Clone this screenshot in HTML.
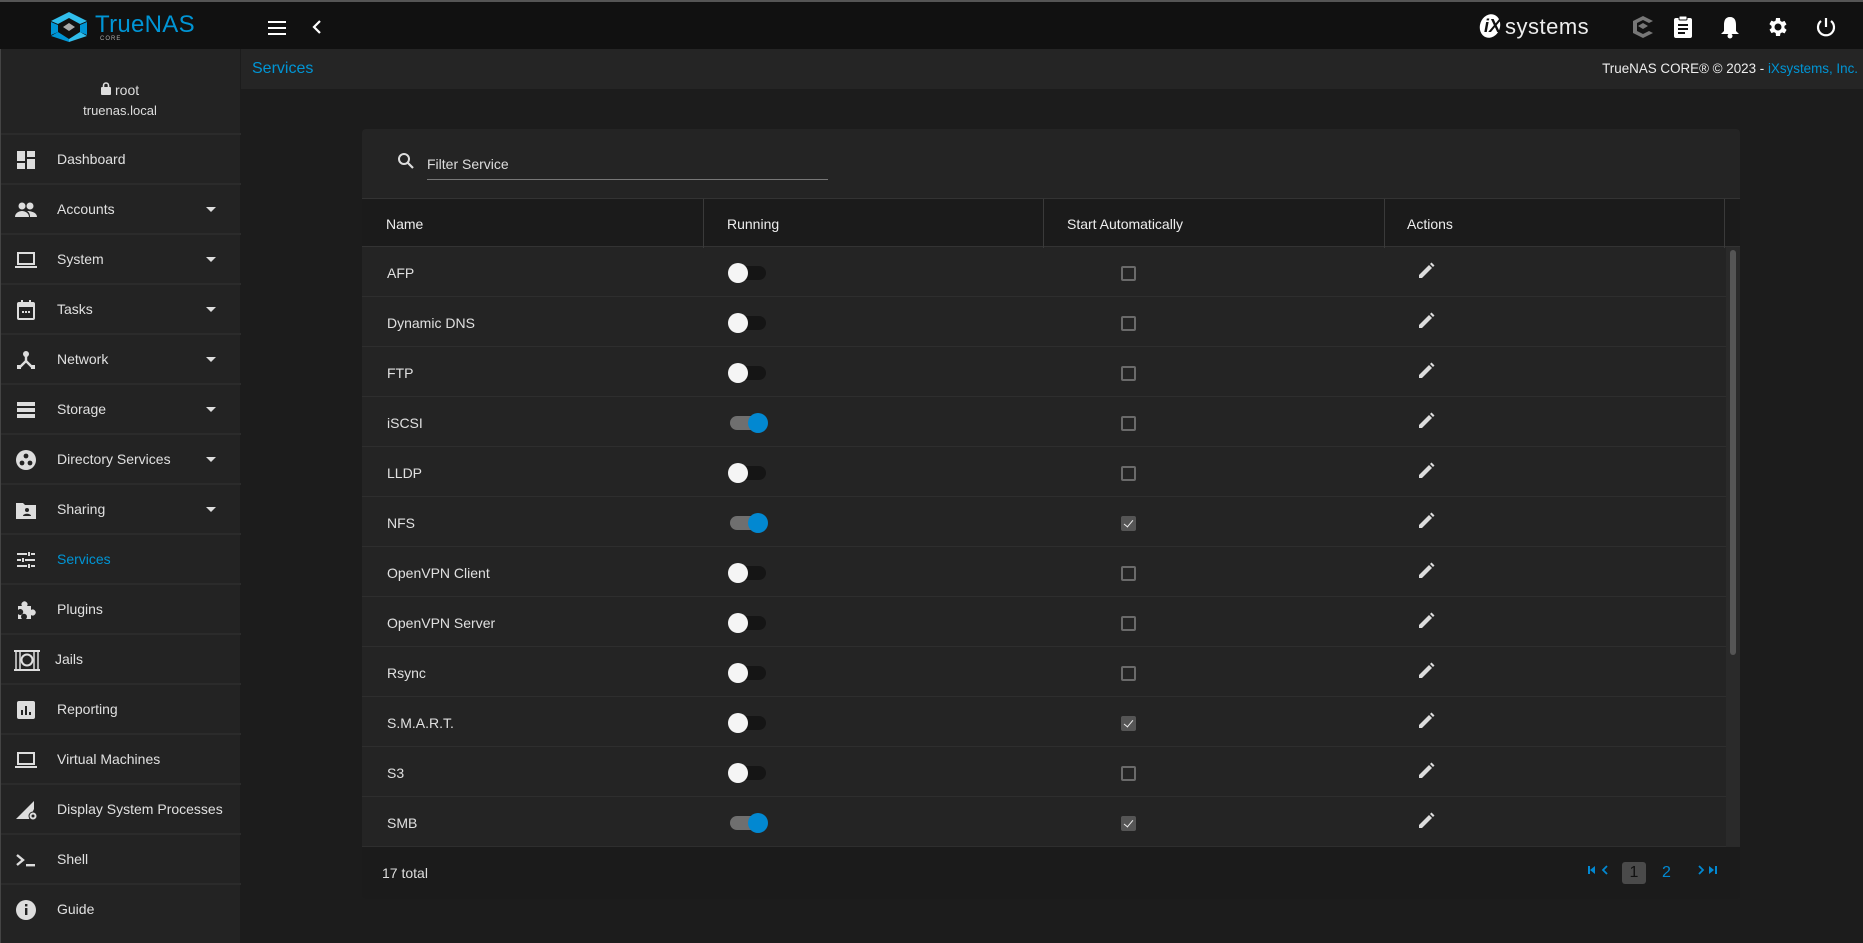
<!DOCTYPE html>
<html><head><meta charset="utf-8"><style>
*{box-sizing:border-box;margin:0;padding:0}
body{width:1863px;height:943px;background:#1c1c1c;font-family:"Liberation Sans",sans-serif;color:#e0e0e0;overflow:hidden;position:relative}
.abs{position:absolute}
#top{left:0;top:0;width:1863px;height:49px;background:#111;border-top:2px solid #555}
#side{left:0;top:49px;width:240px;height:894px;background:#232323;border-left:1px solid #444}
.item{position:absolute;left:0;width:240px;height:50px;border-top:2px solid #2b2b2b;font-size:14px;color:#e0e0e0}
.item span.t{position:absolute;left:56px;top:16px}
.item svg{position:absolute;left:13px;top:13px}
.item .ar{position:absolute;left:205px;top:22px;width:0;height:0;border-left:5px solid transparent;border-right:5px solid transparent;border-top:5px solid #ddd}
#crumb{left:241px;top:49px;width:1622px;height:40px;background:#252525}
#card{left:362px;top:129px;width:1378px;height:770px;background:#242424;border-radius:4px;overflow:hidden}
.hdr{position:absolute;top:69px;left:0;width:1378px;height:49px;background:#1b1b1b;border-top:1px solid #333;border-bottom:1px solid #333;font-size:14px;color:#eee}
.hdr span{position:absolute;top:17px}
.hdr i{position:absolute;top:0;width:1px;height:49px;background:#3a3a3a}
.row{position:absolute;left:0;width:1364px;height:50px;border-bottom:1px solid #2e2e2e;font-size:14px;color:#e0e0e0}
.row .n{position:absolute;left:25px;top:18px}
.tg{position:absolute;left:368px;top:19px;width:36px;height:14px;border-radius:7px;background:#151515}
.tg b{position:absolute;left:-2px;top:-3px;width:20px;height:20px;border-radius:50%;background:#f5f5f5}
.tg.on{background:#6f6f6f}.tg.on b{left:18px;background:#0288d1}
.cb{position:absolute;left:759px;top:19px;width:15px;height:15px;border:2px solid #6a6a6a;border-radius:2px}
.cb.on{background:#555;border-color:#555}
.cb.on:after{content:"";position:absolute;left:3px;top:0px;width:4px;height:8px;border:solid #eee;border-width:0 1.5px 1.5px 0;transform:rotate(40deg)}
.pen{position:absolute;left:1054px;top:14px}
#foot{position:absolute;left:0;top:718px;width:1378px;height:52px;background:#1b1b1b;font-size:14px}
</style></head><body>
<div id="top" class="abs">
 <svg class="abs" style="left:50px;top:10px" width="38" height="30" viewBox="0 0 38 30"><path d="M19 0 L37 9 L30 12 L19 6 L8 12 L1 9Z" fill="#31beec"/><path d="M1 10 L8 13 L8 20 L1 23Z" fill="#0095d5"/><path d="M37 10 L30 13 L30 20 L37 23Z" fill="#0095d5"/><path d="M1 24 L8 20 L19 27 L19 30 Z" fill="#0095d5"/><path d="M37 24 L30 20 L19 27 L19 30Z" fill="#31beec"/><path d="M19 11 L25 15 L19 19 L13 15Z" fill="#aaa"/></svg>
 <div class="abs" style="left:95px;top:9px;font-size:24px;color:#0095d5;letter-spacing:0.3px">True<b style="font-weight:normal">NAS</b></div>
 <div class="abs" style="left:100px;top:34px;font-size:6px;color:#aaa;letter-spacing:1px">CORE</div>
 <div class="abs" style="left:268px;top:19px;width:18px;height:2px;background:#fff;box-shadow:0 6px 0 #fff,0 12px 0 #fff"></div>
 <svg class="abs" style="left:312px;top:18px" width="10" height="14" viewBox="0 0 10 14"><path d="M8 1 L2 7 L8 13" stroke="#fff" stroke-width="2.2" fill="none"/></svg>
 <div class="abs" style="left:1480px;top:12px;width:20px;height:24px;border-radius:50%;background:#fff;transform:rotate(20deg)"></div>
 <div class="abs" style="left:1484px;top:14px;font-size:18px;color:#111;font-weight:bold;font-style:italic">iX</div>
 <div class="abs" style="left:1505px;top:12px;font-size:22px;color:#eee;letter-spacing:0.5px">systems</div>
 <svg class="abs" style="left:1631px;top:13px" width="24" height="24" viewBox="0 0 24 24"><path d="M12 1 L22 6 L18 8 L12 5 L6 8 L6 16 L12 19 L18 16 L22 18 L12 23 L2 18 L2 6Z" fill="#777"/><path d="M12 8 L17 11 L12 14 L7 11Z" fill="#777"/></svg>
 <svg class="abs" style="left:1673px;top:13px" width="20" height="24" viewBox="0 0 20 24"><rect x="1" y="3" width="18" height="20" rx="2" fill="#fff"/><rect x="6" y="1" width="8" height="4" rx="1" fill="#fff" stroke="#111"/><rect x="5" y="9" width="10" height="2" fill="#111"/><rect x="5" y="13" width="10" height="2" fill="#111"/><rect x="5" y="17" width="7" height="2" fill="#111"/></svg>
 <svg class="abs" style="left:1720px;top:13px" width="20" height="24" viewBox="0 0 20 24"><path d="M10 2 C5 2 4 6 4 10 L4 16 L1 19 L19 19 L16 16 L16 10 C16 6 15 2 10 2Z" fill="#fff"/><circle cx="10" cy="21" r="2.5" fill="#fff"/></svg>
 <svg class="abs" style="left:1766px;top:13px" width="24" height="24" viewBox="0 0 24 24"><path fill="#fff" d="M19.4 13a7.5 7.5 0 0 0 0-2l2.1-1.6-2-3.5-2.5 1a7 7 0 0 0-1.7-1L15 3h-4l-.4 2.6a7 7 0 0 0-1.7 1l-2.5-1-2 3.5L6.6 11a7.5 7.5 0 0 0 0 2l-2.1 1.6 2 3.5 2.5-1a7 7 0 0 0 1.7 1L11 21h4l.4-2.6a7 7 0 0 0 1.7-1l2.5 1 2-3.5zM13 15.5a3.5 3.5 0 1 1 0-7 3.5 3.5 0 0 1 0 7z" transform="translate(-1 0)"/></svg>
 <svg class="abs" style="left:1814px;top:13px" width="24" height="24" viewBox="0 0 24 24"><path d="M12 3 L12 12" stroke="#fff" stroke-width="2.2"/><path d="M7 6 A8 8 0 1 0 17 6" stroke="#fff" stroke-width="2.2" fill="none"/></svg>
</div>
<div id="crumb" class="abs">
 <div class="abs" style="left:11px;top:11px;font-size:16px;color:#0095d5">Services</div>
 <div class="abs" style="right:5px;top:12px;font-size:13.4px;color:#eee">TrueNAS CORE® © 2023 - <span style="color:#0095d5">iXsystems, Inc.</span></div>
</div>
<div id="side" class="abs">
 <svg class="abs" style="left:100px;top:33px" width="10" height="13" viewBox="0 0 10 13"><rect x="0" y="5" width="10" height="8" rx="1" fill="#ddd"/><path d="M2.5 6V3.5a2.5 2.5 0 0 1 5 0V6" stroke="#ddd" stroke-width="1.6" fill="none"/></svg>
 <div class="abs" style="left:114px;font-size:14px;top:33px;color:#ddd">root</div>
 <div class="abs" style="left:0;width:238px;text-align:center;font-size:13px;top:54px;color:#ddd">truenas.local</div>
</div>
<div id="items"></div>
<div id="card" class="abs">
 <svg class="abs" style="left:35px;top:23px" width="18" height="18" viewBox="0 0 18 18"><circle cx="7" cy="7" r="5" stroke="#ddd" stroke-width="2" fill="none"/><path d="M11 11 L16 16" stroke="#ddd" stroke-width="2.2"/></svg>
 <div class="abs" style="left:65px;top:27px;font-size:14px;color:#ddd">Filter Service</div>
 <div class="abs" style="left:65px;top:50px;width:401px;height:1px;background:#777"></div>
 <div class="hdr"><span style="left:24px">Name</span><i style="left:341px"></i><span style="left:365px">Running</span><i style="left:681px"></i><span style="left:705px">Start Automatically</span><i style="left:1022px"></i><span style="left:1045px">Actions</span><i style="left:1362px"></i></div>
 <div id="rows"></div>
 <div class="abs" style="left:1364px;top:118px;width:14px;height:600px;background:#2a2a2a"></div>
 <div class="abs" style="left:1368px;top:121px;width:6px;height:405px;background:#555;border-radius:3px"></div>
 <div id="foot"><span class="abs" style="left:20px;top:18px;color:#ddd">17 total</span>
  <svg class="abs" style="left:1226px;top:18px" width="22" height="10" viewBox="0 0 22 10"><rect x="0" y="1" width="2" height="8" fill="#0288d1"/><path d="M7 1v8L2 5z" fill="#0288d1"/><path d="M19 1l-4 4 4 4" stroke="#0288d1" stroke-width="1.8" fill="none"/></svg>
  <div class="abs" style="left:1260px;top:15px;width:24px;height:22px;border-radius:3px;background:#4a4a4a;color:#111;font-size:16px;text-align:center;line-height:22px">1</div>
  <span class="abs" style="left:1300px;top:17px;color:#0288d1;font-size:16px">2</span>
  <svg class="abs" style="left:1334px;top:18px" width="22" height="10" viewBox="0 0 22 10"><path d="M3 1l4 4-4 4" stroke="#0288d1" stroke-width="1.8" fill="none"/><path d="M13 1v8l5-4z" fill="#0288d1"/><rect x="19" y="1" width="2" height="8" fill="#0288d1"/></svg>
 </div>
</div>
<script>
var it=[["Dashboard","dash",0],["Accounts","acc",1],["System","sys",1],["Tasks","task",1],["Network","net",1],["Storage","stor",1],["Directory Services","dir",1],["Sharing","share",1],["Services","svc",0],["Plugins","plug",0],["Jails","jail",0],["Reporting","rep",0],["Virtual Machines","sys",0],["Display System Processes","proc",0],["Shell","shell",0],["Guide","guide",0]];
var ic={dash:'<path d="M3 3h8v10H3zM13 3h8v6h-8zM13 11h8v10h-8zM3 15h8v6H3z" fill="#ddd"/>',
acc:'<circle cx="8" cy="8" r="3.5" fill="#ddd"/><circle cx="16" cy="8" r="3.5" fill="#ddd"/><path d="M1 19c0-4 4-6 7-6s7 2 7 6zM13 13c3 0 10 1 10 6h-7c0-3-1-5-3-6z" fill="#ddd"/>',
sys:'<rect x="4" y="5" width="16" height="11" stroke="#ddd" stroke-width="2" fill="none"/><rect x="1" y="18" width="22" height="2" fill="#ddd"/>',
task:'<rect x="4" y="5" width="16" height="16" rx="1" stroke="#ddd" stroke-width="2" fill="none"/><rect x="4" y="5" width="16" height="4" fill="#ddd"/><rect x="7" y="2" width="2" height="4" fill="#ddd"/><rect x="15" y="2" width="2" height="4" fill="#ddd"/><rect x="8" y="13" width="2" height="2" fill="#ddd"/><rect x="11" y="13" width="2" height="2" fill="#ddd"/><rect x="14" y="13" width="2" height="2" fill="#ddd"/>',
net:'<circle cx="12" cy="6" r="3" fill="#ddd"/><path d="M12 8v5M12 13l-6 6M12 13l6 6" stroke="#ddd" stroke-width="2.4"/><rect x="3" y="17" width="4" height="4" fill="#ddd"/><rect x="17" y="17" width="4" height="4" fill="#ddd"/>',
stor:'<rect x="3" y="4" width="18" height="4" fill="#ddd"/><rect x="3" y="10" width="18" height="4" fill="#ddd"/><rect x="3" y="16" width="18" height="4" fill="#ddd"/>',
dir:'<circle cx="12" cy="12" r="10" fill="#ddd"/><circle cx="12" cy="8" r="2.4" fill="#232323"/><circle cx="8" cy="15" r="2.4" fill="#232323"/><circle cx="16" cy="15" r="2.4" fill="#232323"/>',
share:'<path d="M2 5h7l2 2h11v14H2z" fill="#ddd"/><circle cx="13" cy="12" r="2" fill="#232323"/><path d="M9 18c0-3 8-3 8 0z" fill="#232323"/>',
svc:'<path d="M3 6h10M17 6h4M15 4v4M3 12h4M11 12h10M9 10v4M3 18h10M17 18h4M15 16v4" stroke="#ddd" stroke-width="2"/>',
plug:'<path d="M4 8h4a3 3 0 1 1 5 0h4v4a3 3 0 1 1 0 5v4h-5a3 3 0 1 0-4 0H4v-5a3 3 0 1 0 0-4z" fill="#ddd"/>',
jail:'<rect x="0" y="2" width="26" height="2" fill="#ddd"/><rect x="0" y="21" width="26" height="2" fill="#ddd"/><path d="M2 4v17M6 4v17M20 4v17M24 4v17" stroke="#ddd" stroke-width="1.5"/><circle cx="13" cy="12" r="5.5" stroke="#ddd" stroke-width="2" fill="none"/>',
rep:'<rect x="3" y="3" width="18" height="18" rx="2" fill="#ddd"/><path d="M8 17v-5M12 17V8M16 17v-3" stroke="#232323" stroke-width="2"/>',
proc:'<path d="M2 21L20 3v8l-5 10z" fill="#ddd"/><circle cx="19" cy="18" r="4" fill="#ddd" stroke="#232323" stroke-width="1"/><circle cx="19" cy="18" r="1.5" fill="#232323"/>',
shell:'<path d="M3 7l6 5-6 5" stroke="#ddd" stroke-width="2.4" fill="none"/><rect x="12" y="16" width="9" height="2.4" fill="#ddd"/>',
guide:'<circle cx="12" cy="12" r="10" fill="#ddd"/><rect x="11" y="10" width="2.4" height="7" fill="#232323"/><rect x="11" y="6" width="2.4" height="2.4" fill="#232323"/>'};
var h='';it.forEach(function(a,i){var y=133+50*i;h+='<div class="item" style="top:'+y+'px;left:1px"><svg width="26" height="24" viewBox="0 0 26 24">'+ic[a[1]]+'</svg><span class="t" style="'+(a[0]=="Services"?'color:#0095d5':'')+(a[0]=="Jails"?';left:54px':'')+'">'+a[0]+'</span>'+(a[2]?'<i class="ar"></i>':'')+'</div>';});
document.getElementById('items').innerHTML=h;
var r=[["AFP",0,0],["Dynamic DNS",0,0],["FTP",0,0],["iSCSI",1,0],["LLDP",0,0],["NFS",1,1],["OpenVPN Client",0,0],["OpenVPN Server",0,0],["Rsync",0,0],["S.M.A.R.T.",0,1],["S3",0,0],["SMB",1,1]];
var s='';r.forEach(function(a,i){s+='<div class="row" style="top:'+(118+50*i)+'px"><span class="n">'+a[0]+'</span><div class="tg'+(a[1]?' on':'')+'"><b></b></div><div class="cb'+(a[2]?' on':'')+'"></div><svg class="pen" width="20" height="20" viewBox="0 0 20 20"><path d="M3 17v-3L13 4l3 3L6 17z" fill="#ddd"/><path d="M14 3l1.5-1.5 3 3L17 6z" fill="#ddd"/></svg></div>';});
document.getElementById('rows').innerHTML=s;
</script>
</body></html>
